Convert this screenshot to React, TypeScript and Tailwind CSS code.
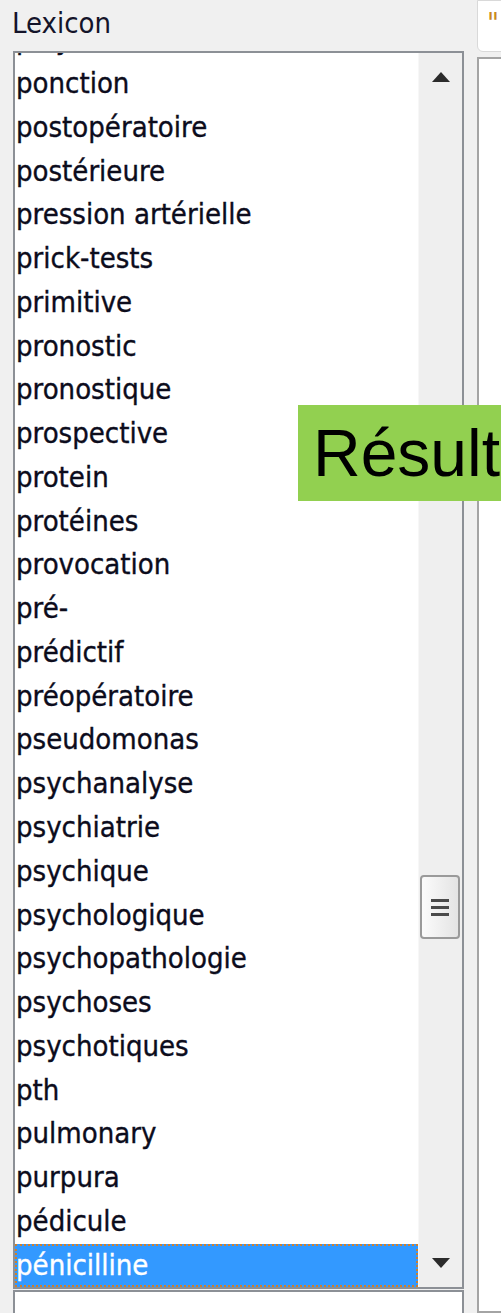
import React from 'react';

const words = [
  'polyarthrite',
  'ponction',
  'postopératoire',
  'postérieure',
  'pression artérielle',
  'prick-tests',
  'primitive',
  'pronostic',
  'pronostique',
  'prospective',
  'protein',
  'protéines',
  'provocation',
  'pré-',
  'prédictif',
  'préopératoire',
  'pseudomonas',
  'psychanalyse',
  'psychiatrie',
  'psychique',
  'psychologique',
  'psychopathologie',
  'psychoses',
  'psychotiques',
  'pth',
  'pulmonary',
  'purpura',
  'pédicule',
  'pénicilline',
];

const selected = 'pénicilline';

const uiFont = "font-['DejaVu_Sans_Condensed','DejaVu_Sans',Tahoma,sans-serif]";

function ArrowUp() {
  return (
    <svg width="20" height="12" viewBox="0 0 20 12" aria-hidden>
      <polygon points="10,1 19,11 1,11" fill="#2b2b2b" />
    </svg>
  );
}

function ArrowDown() {
  return (
    <svg width="20" height="12" viewBox="0 0 20 12" aria-hidden>
      <polygon points="1,1 19,1 10,11" fill="#2b2b2b" />
    </svg>
  );
}

function ScrollBar() {
  return (
    <div className="w-[44px] shrink-0 flex flex-col bg-[#efefef] border-l border-[#f7f7f7]">
      <div className="h-[44px] flex items-center justify-center pt-[3px]">
        <ArrowUp />
      </div>
      <div className="flex-1 relative">
        {/* thumb */}
        <div className="absolute left-[1px] top-[778px] w-[40px] h-[64px] rounded-[4px] border-2 border-[#9a9a9a] bg-gradient-to-r from-[#fbfbfb] to-[#e4e4e4] flex flex-col items-center justify-center gap-[4px]">
          <div className="w-[18px] h-[3px] bg-[#4a4a4a]" />
          <div className="w-[18px] h-[3px] bg-[#4a4a4a]" />
          <div className="w-[18px] h-[3px] bg-[#4a4a4a]" />
        </div>
      </div>
      <div className="h-[44px] flex items-center justify-center pb-[4px]">
        <ArrowDown />
      </div>
    </div>
  );
}

function LexiconList() {
  return (
    <div className="h-[1238px] border-2 border-[#8c9096] bg-white flex overflow-hidden">
      <div className="flex-1 min-w-0 overflow-hidden">
        <ul className="-mt-[34.8px] [-webkit-text-stroke:0.35px]">
          {words.map((w) => {
            const isSel = w === selected;
            return (
              <li
                key={w}
                className={
                  isSel
                    ? 'h-[43.78px] leading-[43.78px] pl-[1px] bg-[#3399ff] text-white outline-2 outline-dotted outline-[#d0802c] -outline-offset-2'
                    : 'h-[43.78px] leading-[43.78px] pl-[1px] text-[#0c0c1c]'
                }
              >
                {w}
              </li>
            );
          })}
        </ul>
      </div>
      <ScrollBar />
    </div>
  );
}

export default function App() {
  return (
    <div className={`relative w-[501px] h-[1313px] bg-[#f0f0f0] overflow-hidden flex ${uiFont} text-[29px]`}>
      <div className="w-[464px] shrink-0 pl-[13px]">
        <div className="h-[51px] pt-[9px] leading-[29px] text-[#14142a] -ml-[1px]">Lexicon</div>
        <LexiconList />
        <div className="mt-[1px] h-[40px] border-2 border-[#8c9096] bg-white" />
      </div>

      <div className="flex-1 pl-[13px] flex flex-col gap-[5px]">
        <div className="h-[52px] bg-white border border-[#d9d9d9] rounded-bl-[6px] pl-[9px] pt-[8px] leading-[28px] text-[#c98a1e] overflow-hidden">
          "|
        </div>
        <div className="flex-1 bg-white border-2 border-[#a4a4a4]" />
      </div>

      {/* overlay caption */}
      <div className="absolute left-[298px] top-[405px] w-[230px] h-[96px] bg-[#92d050] pl-[15px] flex items-center font-['Liberation_Sans',Arial,sans-serif] text-[66px] text-black">
        Résultats
      </div>
    </div>
  );
}
